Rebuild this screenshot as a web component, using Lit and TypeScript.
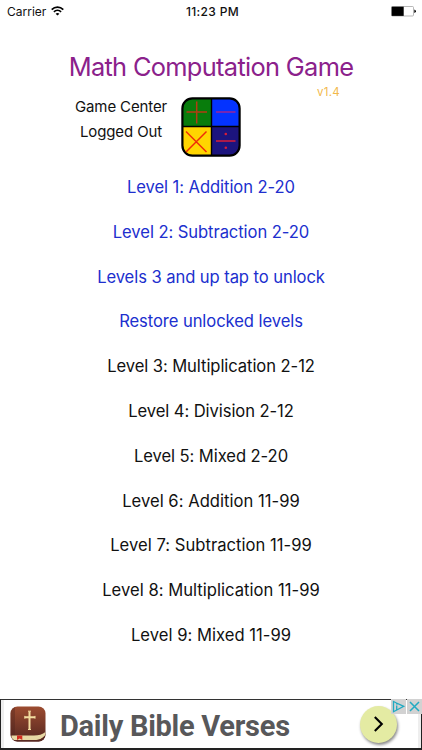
import { LitElement, html, css } from "lit";
import { customElement } from "lit/decorators.js";
import { classMap } from "lit/directives/class-map.js";

const items = [
  { label: "Level 1: Addition 2-20", open: true },
  { label: "Level 2: Subtraction 2-20", open: true },
  { label: "Levels 3 and up tap to unlock", open: true },
  { label: "Restore unlocked levels", open: true },
  { label: "Level 3: Multiplication 2-12", open: false },
  { label: "Level 4: Division 2-12", open: false },
  { label: "Level 5: Mixed 2-20", open: false },
  { label: "Level 6: Addition 11-99", open: false },
  { label: "Level 7: Subtraction 11-99", open: false },
  { label: "Level 8: Multiplication 11-99", open: false },
  { label: "Level 9: Mixed 11-99", open: false },
];

@customElement("status-bar")
export class StatusBar extends LitElement {
  static styles = css`
    :host { display: grid; grid-template-columns: 1fr auto 1fr; align-items: center; height: 22px; padding: 0 6px 0 7px; font-size: 12px; color: #111; }
    .left { display: flex; align-items: center; gap: 5px; letter-spacing: 0; }
    .time { font-weight: 500; font-size: 12px; letter-spacing: 0.35px; margin-left: 2px; }
    .battery { justify-self: end; }
    svg { display: block; }
  `;
  render() {
    return html`
      <div class="left">
        <span>Carrier</span>
        <svg width="13" height="10" viewBox="0 0 13 10" fill="none" stroke="#000" stroke-width="1.7">
          <path d="M0.7 3.6C4 .3 9 .3 12.3 3.6M2.9 5.9C5 3.9 8 3.9 10.1 5.9" />
          <path d="M6.5 9.6 4.6 7.7C5.6 6.7 7.4 6.7 8.4 7.7Z" fill="#000" stroke="none" />
        </svg>
      </div>
      <div class="time">11:23 PM</div>
      <svg class="battery" width="25" height="11" viewBox="0 0 25 11">
        <rect x=".5" y=".5" width="22" height="9.5" rx="1" fill="#fff" stroke="#999" stroke-width=".7" />
        <rect x=".7" y=".7" width="12" height="9.2" fill="#000" />
        <path d="M23.3 3.5Q25 4 25 5.3T23.3 7Z" fill="#000" />
      </svg>
    `;
  }
}

@customElement("game-logo")
export class GameLogo extends LitElement {
  static styles = css`:host, svg { display: block; }`;
  render() {
    return html`
      <svg width="60" height="60" viewBox="0 0 60 60">
        <defs><clipPath id="tile"><rect x="1" y="1" width="58" height="58" rx="10" /></clipPath></defs>
        <g clip-path="url(#tile)">
          <path fill="#087c0c" d="M0 0h30v30H0z" />
          <path fill="#0433ff" d="M30 0h30v30H30z" />
          <path fill="#ffd500" d="M0 30h30v30H0z" />
          <path fill="#1c147e" d="M30 30h30v30H30z" />
        </g>
        <path d="M30.5 1v58M1 29.5h58" stroke="#000" stroke-width="1.4" />
        <rect x="1.4" y="1.4" width="57.2" height="57.2" rx="10" fill="none" stroke="#000" stroke-width="2.2" />
        <g fill="none" stroke-width="1.5">
          <path stroke="#b23c12" d="M5.5 15H26M15.7 4.5v22" />
          <path stroke="#9b2499" d="M35 15h19.5" />
          <path stroke="#ef2c08" d="m5 34.5 20.5 20.5M25.5 34.5 5 55" />
          <path stroke="#d91c38" d="M35 44h19.5" />
        </g>
        <g fill="#d91c38"><circle cx="44.8" cy="37" r="1.3" /><circle cx="44.8" cy="50.8" r="1.3" /></g>
      </svg>
    `;
  }
}

@customElement("ad-banner")
export class AdBanner extends LitElement {
  static styles = css`
    :host { display: block; height: 51px; }
    .frame { position: relative; box-sizing: border-box; height: 51px; display: flex; align-items: center; padding: 0 24px 0 9px; background: #fff; border: 1px solid #222; border-top: 1px solid #333; border-bottom: 2px solid #222; box-shadow: inset 3px 0 #eee, inset -3px 0 #eee; }
    .name { flex: 1; margin-left: 14px; font: 700 29px/40px Roboto, sans-serif; letter-spacing: -0.27px; color: #58585a; white-space: nowrap; padding-top: 3px; }
    .go { width: 37px; height: 37px; border-radius: 50%; background: #e4eba3; box-shadow: 1px 2px 3px #0007; display: grid; place-items: center; }
    .marks { position: absolute; top: -1px; right: -1px; display: flex; gap: 1px; }
    .mark { width: 15px; height: 15px; background: #d2d2d2; }
    svg { display: block; }
  `;
  render() {
    return html`
      <div class="frame">
        <svg width="36" height="36" viewBox="0 0 36 36">
          <defs>
            <linearGradient id="cover" x2="0" y2="1"><stop stop-color="#9d4c30" /><stop offset="1" stop-color="#542721" /></linearGradient>
            <clipPath id="book"><rect x=".5" y=".5" width="35" height="35" rx="7" /></clipPath>
          </defs>
          <g clip-path="url(#book)">
            <path fill="url(#cover)" d="M0 0h36v36H0z" />
            <path fill="#4a211d" opacity=".35" d="M0 0h5v30H0z" />
            <path fill="#e7d8a4" d="M1.5 29.5H24Q31 29.5 35.5 26V29Q32 34 26 34H4Q1 32 1.5 29.5Z" />
            <path fill="#5a2a22" d="M2 34H27Q33 33 36 28V36H2Z" />
            <path fill="#d22d20" d="M7 29.5h5.3V34L9.7 32.5 7 34Z" />
          </g>
          <path d="M19.5 5.5V23.5M14.8 11.3H25" stroke="#f3dda0" stroke-width="2" fill="none" />
          <path d="M18 5.2h3M18 23.5h3M14.8 9.9v2.8M25 9.9v2.8" stroke="#f3dda0" stroke-width="1" />
        </svg>
        <div class="name">Daily Bible Verses</div>
        <div class="go">
          <svg width="12" height="18" viewBox="0 0 12 18"><path d="m1.8 2 7 7-7 7" fill="none" stroke="#000" stroke-width="2.1" /></svg>
        </div>
        <div class="marks">
          <div class="mark"><svg width="15" height="15" viewBox="0 0 15 15" fill="none" stroke="#21aac2" stroke-width="1.3"><path d="M5.5 4 12.7 7.3 2.5 12.7V2.5L5.5 4M5.7 6.5v4.5M5.7 4.4v1" /></svg></div>
          <div class="mark"><svg width="15" height="15" viewBox="0 0 15 15" fill="none" stroke="#21aac2" stroke-width="1.5"><path d="m3 3 9 9m0-9-9 9" /></svg></div>
        </div>
      </div>
    `;
  }
}

@customElement("app-root")
export class AppRoot extends LitElement {
  static styles = css`
    :host { display: flex; flex-direction: column; height: 750px; background: #fff; font-family: Inter, "Liberation Sans", sans-serif; color: #111; }
    h1 { margin: 28px 0 0; height: 34px; text-align: center; font-weight: 400; font-size: 25.4px; line-height: 34px; letter-spacing: -0.68px; color: #8b218b; white-space: nowrap; }
    .version { height: 13px; line-height: 16px; margin-right: 82px; text-align: right; font-size: 11.5px; letter-spacing: 0.3px; color: #f2b84b; }
    .center { display: flex; gap: 14px; margin-left: 75px; height: 60px; }
    .account { width: 92px; text-align: center; font-size: 15px; letter-spacing: -0.12px; line-height: 24.5px; margin-top: -2px; white-space: nowrap; }
    ul { list-style: none; margin: 8px 0 0; padding: 0; }
    li { height: 44.8px; line-height: 44.8px; text-align: center; font-size: 16.6px; letter-spacing: -0.08px; white-space: nowrap; }
    .open { color: #202fce; }
    .wide { letter-spacing: 0.02px; }
    ad-banner { margin-top: auto; }
  `;
  render() {
    return html`
      <status-bar></status-bar>
      <h1>Math Computation Game</h1>
      <div class="version">v1.4</div>
      <div class="center">
        <div class="account"><div>Game Center</div><div>Logged Out</div></div>
        <game-logo></game-logo>
      </div>
      <ul>${items.map((i) => html`<li class=${classMap({ open: i.open, wide: i.label.includes("11-") })}>${i.label}</li>`)}</ul>
      <ad-banner></ad-banner>
    `;
  }
}
